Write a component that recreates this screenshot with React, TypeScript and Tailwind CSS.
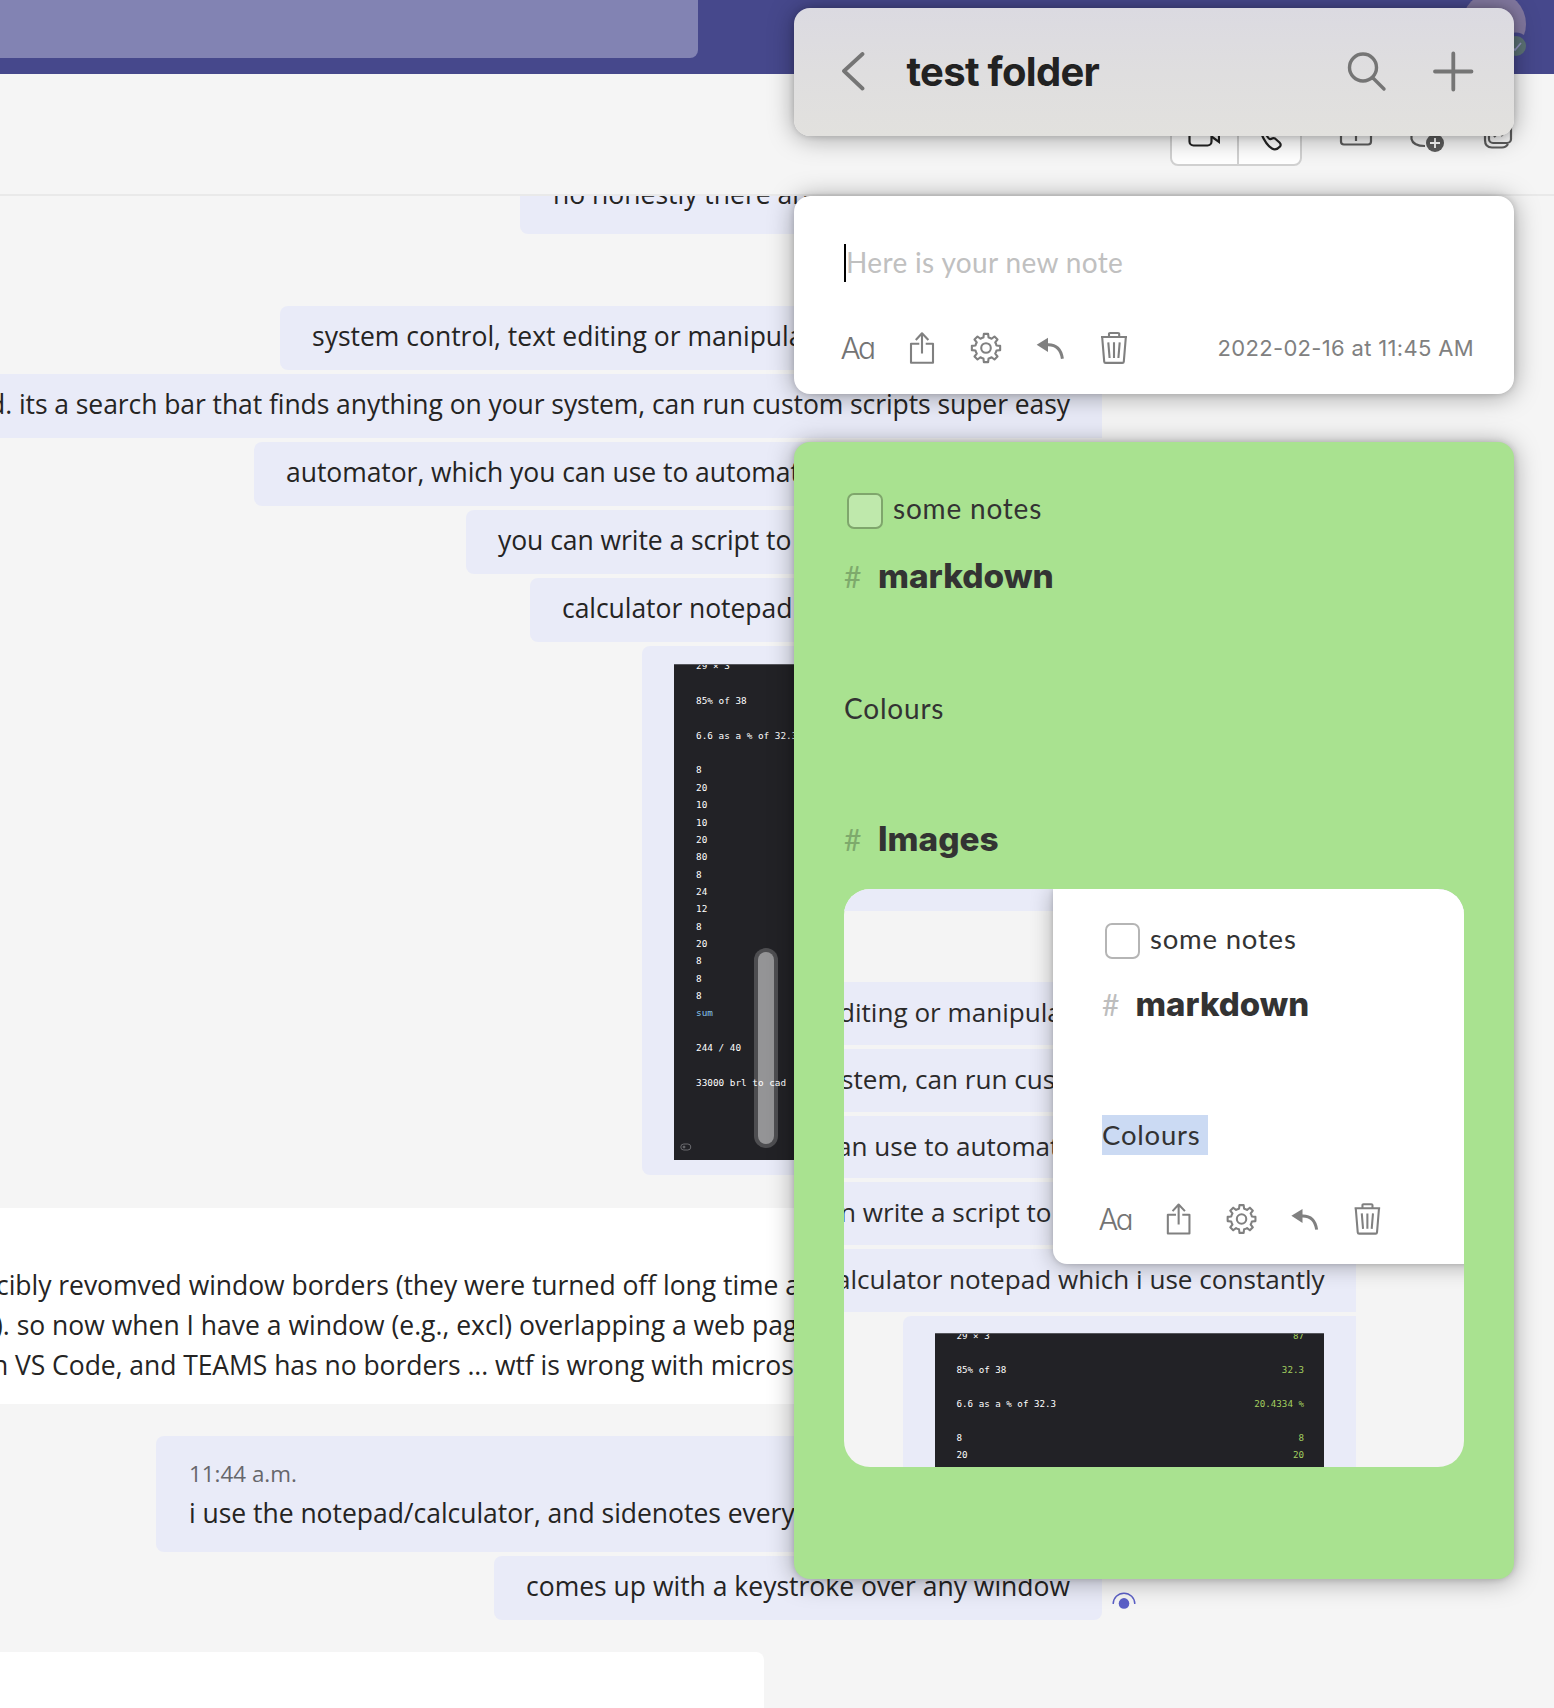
import type { ReactNode } from 'react';

const CALC_ROWS = [
  '29 × 3', '', '85% of 38', '', '6.6 as a % of 32.3', '', '8', '20', '10', '10', '20', '80', '8',
  '24', '12', '8', '20', '8', '8', '8', 'sum', '', '244 / 40', '', '33000 brl to cad',
];

const PREVIEW_ROWS: [string, string][] = [
  ['29 × 3', '87'],
  ['', ''],
  ['85% of 38', '32.3'],
  ['', ''],
  ['6.6 as a % of 32.3', '20.4334 %'],
  ['', ''],
  ['8', '8'],
  ['20', '20'],
];

const GEAR_PATH = (() => {
  const pts: string[] = [];
  for (let k = 0; k < 8; k++) {
    const a = (k * Math.PI) / 4;
    const at = (r: number, t: number) =>
      `${(16 + r * Math.cos(a + t)).toFixed(2)} ${(16 + r * Math.sin(a + t)).toFixed(2)}`;
    pts.push(`${k === 0 ? 'M' : 'A10.6 10.6 0 0 1 '}${at(10.8, -0.24)}`);
    pts.push(`L${at(14.3, -0.15)}`, `L${at(14.3, 0.15)}`, `L${at(10.8, 0.24)}`);
  }
  return `${pts.join('')}A10.6 10.6 0 0 1 ${(16 + 10.8 * Math.cos(-0.24)).toFixed(2)} ${(16 + 10.8 * Math.sin(-0.24)).toFixed(2)}Z`;
})();

function Icon({ children }: { children: ReactNode }) {
  return (
    <svg viewBox="0 0 32 32" className="h-8 w-8 shrink-0 overflow-visible" fill="none" stroke="#808080" strokeWidth="2.1" strokeLinejoin="round">
      {children}
    </svg>
  );
}

function NoteToolbar() {
  return (
    <div className="flex h-8 items-center gap-8">
      <div className="-ml-[1.5px] h-8 w-[33.5px] whitespace-nowrap font-['Inter',sans-serif] text-[30px] leading-[33px] font-light tracking-[-2.5px] text-[#747474] [font-feature-settings:'cv11']">
        Aa
      </div>
      <Icon>
        <path d="M13.3 11.7H5V30.8H27V11.7H19.7M16 1.5V21.5M9.8 8 16 1.3 22.4 8" />
      </Icon>
      <Icon>
        <path d={GEAR_PATH} />
        <circle cx="16" cy="16" r="4.8" />
      </Icon>
      <Icon>
        <path d="M2.7 12.7 14 5.7V20Z" fill="#808080" stroke="none" />
        <path d="M13 12.9C22 12.4 27 17 28.4 26.8" strokeWidth="3" />
      </Icon>
      <Icon>
        <path d="M3 5H29M11 5V1.6Q11 1 12 1H20Q21.2 1 21.2 1.8V5M4.2 5.5 6.2 29.6Q6.3 30.9 7.6 30.9H24.4Q25.7 30.9 25.8 29.6L27.8 5.5M10.3 10.3 11.6 26M16 10.3V26M21.7 10.3 20.4 26" />
      </Icon>
    </div>
  );
}

function Bubble({ className, children }: { className: string; children?: ReactNode }) {
  return (
    <div className={`mt-1 h-16 shrink-0 overflow-hidden rounded-l-lg bg-[#e9ebf8] px-8 leading-[61px] whitespace-nowrap ${className}`}>
      {children}
    </div>
  );
}

function ChatPane() {
  return (
    <div className="flex h-[1512px] flex-col overflow-hidden font-['Open_Sans',sans-serif] text-[26.5px] text-[#252423]">
      <div className="flex w-[1102px] flex-col items-end">
        <div className="h-[38px] w-[582px] overflow-hidden rounded-bl-lg bg-[#e9ebf8] px-8">
          <div className="-mt-8 ml-px leading-[61px] whitespace-nowrap">no honestly there are so many</div>
        </div>
        <Bubble className="mt-[72px] w-[822px]">system control, text editing or manipulation</Bubble>
        <Bubble className="tracking-[-0.07px]">
          d. its a search bar that finds anything on your system, can run custom scripts super easy
        </Bubble>
        <Bubble className="w-[848px] tracking-[-0.05px]">automator, which you can use to automate</Bubble>
        <Bubble className="w-[636px] tracking-[-0.05px]">you can write a script to</Bubble>
        <Bubble className="w-[572px] tracking-[-0.05px]">calculator notepad which i use constantly</Bubble>
        <div className="mt-1 h-[529px] w-[460px] rounded-l-lg bg-[#e9ebf8] px-8 pt-[18px]">
          <div className="relative h-[496px] overflow-hidden border-t border-[#55565c] bg-[#222226] pl-[22px] font-['DejaVu_Sans_Mono',monospace] text-[9.35px] leading-[17.35px] text-white">
            <div className="-mt-[7.6px]">
              {CALC_ROWS.map((row, i) => (
                <div key={i} className={row === 'sum' ? 'h-[17.35px] text-[#86c4ec]' : 'h-[17.35px]'}>{row}</div>
              ))}
            </div>
            <svg className="absolute bottom-[9px] left-[6px] h-2 w-3" viewBox="0 0 12 8" fill="none" stroke="#6b6b6f">
              <rect x="0.8" y="1" width="10" height="6" rx="3" />
              <circle cx="4" cy="4" r="1" fill="#6b6b6f" />
            </svg>
            <div className="absolute top-[283px] left-20 h-[200px] w-6 rounded-full bg-white/20 p-1">
              <div className="h-full rounded-full bg-white/40" />
            </div>
          </div>
        </div>
      </div>

      <div className="mt-[33px] h-[196px] w-[1000px] shrink-0 bg-white pt-[56.5px] leading-10 whitespace-nowrap">
        <div className="-ml-[4px] tracking-[-0.03px]">cibly revomved window borders (they were turned off long time ago</div>
        <div className="-ml-[5px]">). so now when I have a window (e.g., excl) overlapping a web page</div>
        <div className="-ml-[8px] tracking-[-0.05px]">n VS Code, and TEAMS has no borders ... wtf is wrong with microsoft</div>
      </div>

      <div className="flex w-[1102px] flex-col items-end">
        <div className="mt-8 h-[116px] w-[946px] rounded-l-lg bg-[#e9ebf8] px-[33px] pt-[18.5px]">
          <div className="text-[22.4px] leading-[38px] text-[#66666b]">11:44 a.m.</div>
          <div className="leading-10 tracking-[-0.03px] whitespace-nowrap">i use the notepad/calculator, and sidenotes every day</div>
        </div>
        <div className="relative">
          <Bubble className="w-[608px] rounded-r-lg">comes up with a keystroke over any window</Bubble>
          <svg className="absolute bottom-[8px] left-[618px] h-5 w-6" viewBox="0 0 24 20" fill="none">
            <path d="M1.2 12A10.8 10.8 0 0 1 22.8 12" stroke="#5b5fc7" strokeWidth="1.4" />
            <circle cx="12" cy="11.4" r="5.3" fill="#5b5fc7" />
          </svg>
        </div>
      </div>

      <div className="mt-8 h-14 w-[764px] shrink-0 rounded-tr-lg bg-white" />
    </div>
  );
}

function CallBar() {
  return (
    <div className="flex h-[122px] items-start border-b-2 border-[#e9e9e9] pt-[28px] pl-[1170px]">
      <div className="flex h-16 w-[132px] rounded-lg border-2 border-[#d1d1d1] bg-white">
        <div className="flex w-[67px] items-center justify-center border-r-2 border-[#d1d1d1] pr-1">
          <svg viewBox="0 0 34 28" className="h-7 w-[34px]" fill="none" stroke="#242424" strokeWidth="2.2">
            <rect x="3.5" y="3" width="22" height="22.5" rx="4" />
            <path d="M25.5 16.5 33 22V6l-7.5 5.5" />
          </svg>
        </div>
        <div className="flex flex-1 items-center justify-center">
          <svg viewBox="0 0 30 36" className="h-9 w-[30px]" fill="none" stroke="#242424" strokeWidth="2.2" strokeLinejoin="round">
            <path d="M7 3Q2 7 6 17Q11 29 17 32.5Q21 35 25 30.5Q26.500 28.500 24.500 26.500L20 22.500Q18.500 21.500 16 23Q14 23.500 12 20L10.500 17Q10.500 15 13 13L11 5Q9 2 7 3Z" />
          </svg>
        </div>
      </div>
      <svg viewBox="0 0 36 34" className="mt-[12px] ml-9 h-[34px] w-9" fill="none" stroke="#5c5c5c" strokeWidth="2.2">
        <rect x="3" y="3" width="30" height="27.500" rx="3" />
        <path d="M18 27V9" />
      </svg>
      <svg viewBox="0 0 40 40" className="mt-[12px] ml-[34px] h-10 w-10" fill="none" stroke="#5c5c5c" strokeWidth="2.2">
        <path d="M3.500 21V25Q5 32 17 32" />
        <circle cx="27" cy="29" r="9" fill="#5b5b5b" stroke="none" />
        <path d="M22 29H32M27 24V34" stroke="#ffffff" strokeWidth="1.800" />
      </svg>
      <svg viewBox="0 0 32 38" className="mt-[12px] ml-[34px] h-[38px] w-8" fill="none" stroke="#5c5c5c" strokeWidth="2.2">
        <rect x="7" y="5" width="22" height="24" rx="4" />
        <path d="M3 13V26Q3 33.500 10 33.500H20Q24 33.500 26 30M12 23 14.500 20.500M19 22 22.500 18.500" />
      </svg>
    </div>
  );
}

const CARD = 'rounded-2xl shadow-[0_0_6px_rgba(0,0,0,0.16),0_2px_26px_rgba(0,0,0,0.35)]';

function FolderHeader() {
  return (
    <div className={`flex h-32 shrink-0 items-center bg-linear-to-b from-[#dbdae1] via-[#dfdedf] to-[#e2e1de] ${CARD}`}>
      <svg viewBox="0 0 24 40" className="ml-[47px] h-10 w-6" fill="none" stroke="#757575" strokeWidth="3.800" strokeLinecap="round" strokeLinejoin="round">
        <path d="M21.500 2 3 19 21.500 36.500" />
      </svg>
      <div className="ml-[41.5px] font-['Inter',sans-serif] text-[40px] leading-[128px] font-bold tracking-[-0.7px] text-[#222222]">
        test folder
      </div>
      <svg viewBox="0 0 42 42" className="mr-[45px] ml-auto h-[42px] w-[42px]" fill="none" stroke="#757575" strokeWidth="3.400" strokeLinecap="round">
        <circle cx="18" cy="16.500" r="13.500" />
        <path d="M28 27 39 38" />
      </svg>
      <svg viewBox="0 0 42 42" className="mr-[40px] h-[42px] w-[42px]" fill="none" stroke="#757575" strokeWidth="3.800" strokeLinecap="round">
        <path d="M3 20.500H39.500M21.300 2.500V38.500" />
      </svg>
    </div>
  );
}

function NewNote() {
  return (
    <div className={`mt-[60px] h-[198px] shrink-0 bg-white pt-12 ${CARD}`}>
      <div className="ml-[50px] flex h-[38px] border-l-2 border-black font-['Lato',sans-serif] text-[28px] leading-[36px] tracking-[0.35px] text-[#c0c0c0]">
        Here is your new note
      </div>
      <div className="mt-[50px] flex items-center justify-between pr-10 pl-12">
        <NoteToolbar />
        <div className="font-['Inter',sans-serif] text-[22px] leading-8 tracking-[0.33px] text-[#808080]">
          2022-02-16 at 11:45 AM
        </div>
      </div>
    </div>
  );
}

function ImagePreview() {
  return (
    <div className="relative mt-[29px] h-[578px] w-[620px] overflow-hidden rounded-[26px] bg-[#f4f4f4] font-['Open_Sans',sans-serif] text-[26.1px] leading-[60px] whitespace-nowrap text-[#2b2a2a]">
      <div className="h-[22px] bg-[#e9ebf8]" />
      <div className="mt-[71px] flex w-[511.5px] flex-col gap-1">
        <div className="h-[62.8px] overflow-hidden bg-[#e9ebf8]"><div className="-ml-[5px]">diting or manipulation</div></div>
        <div className="h-[62.8px] overflow-hidden bg-[#e9ebf8]"><div className="-ml-[3px]">stem, can run custom</div></div>
        <div className="h-[62.8px] overflow-hidden bg-[#e9ebf8]"><div className="-ml-[7px]">an use to automate</div></div>
        <div className="h-[62.8px] overflow-hidden bg-[#e9ebf8]"><div className="-ml-[4px]">n write a script to</div></div>
        <div className="h-[62.8px] overflow-hidden bg-[#e9ebf8]"><div className="-ml-[8px]">alculator notepad which i use constantly</div></div>
        <div className="ml-[59px] h-[152px] rounded-tl-lg bg-[#e9ebf8] px-8 pt-[17px]">
          <div className="h-[135px] overflow-hidden border-t border-[#55565c] bg-[#222226] pr-[19.5px] pl-[21.500px] font-['DejaVu_Sans_Mono',monospace] text-[9.2px] leading-[17px] text-white">
            <div className="-mt-[7.2px]">
              {PREVIEW_ROWS.map(([left, right], i) => (
                <div key={i} className="flex h-[17px] justify-between">
                  <span>{left}</span>
                  <span className="text-[#a3cf5f]">{right}</span>
                </div>
              ))}
            </div>
          </div>
        </div>
      </div>

      <div className="absolute top-0 left-[208.5px] h-[374.7px] w-[460px] rounded-bl-[14px] bg-white pt-[34px] pl-[49.5px] font-['Lato',sans-serif] text-[27.5px] tracking-[0.8px] text-[#333333] shadow-[0_0_5px_rgba(0,0,0,0.16),0_2px_22px_rgba(0,0,0,0.3)]">
        <div className="flex h-[35.5px]">
          <div className="ml-[2.5px] h-[35.5px] w-[35.5px] rounded-[7px] border-2 border-[#b5b5b5]" />
          <div className="ml-[10px] leading-[31px]">some notes</div>
        </div>
        <div className="mt-[24.5px] flex h-[43px] items-baseline leading-[43px] tracking-normal">
          <span className="w-[33.5px] text-[30px] text-[#bdbdbd]">#</span>
          <span className="font-['Inter',sans-serif] text-[33px] font-extrabold">markdown</span>
        </div>
        <div className="mt-[89px] h-[39.6px] w-[106px] bg-[#cbdaf3] leading-[40px]">Colours</div>
        <div className="mt-[48px] -ml-[2px] origin-left scale-[0.983] tracking-normal">
          <NoteToolbar />
        </div>
      </div>
    </div>
  );
}

function GreenNote() {
  return (
    <div className={`mt-12 h-[1137px] shrink-0 bg-[#a9e290] pt-[51px] pl-[50px] font-['Lato',sans-serif] text-[28px] tracking-[0.8px] text-[#333333] ${CARD}`}>
      <div className="flex h-9">
        <div className="ml-[3px] h-9 w-9 rounded-[7px] border-2 border-[#7fa66c] bg-[#bfe9ac]" />
        <div className="ml-[10px] leading-[31px]">some notes</div>
      </div>
      <div className="mt-[25px] flex h-11 items-baseline leading-[44px] tracking-normal">
        <span className="w-[34px] text-[30px] text-[#7eaa6c]">#</span>
        <span className="font-['Inter',sans-serif] text-[33.4px] font-extrabold">markdown</span>
      </div>
      <div className="mt-[90px] h-10 leading-10">Colours</div>
      <div className="mt-[89px] flex h-11 items-baseline leading-[44px] tracking-normal">
        <span className="w-[34px] text-[30px] text-[#7eaa6c]">#</span>
        <span className="font-['Inter',sans-serif] text-[33.4px] font-extrabold">Images</span>
      </div>
      <div className="-mt-px tracking-normal">
        <ImagePreview />
      </div>
    </div>
  );
}

export default function App() {
  return (
    <div className="relative h-[1708px] w-[1554px] overflow-hidden bg-[#f5f5f5]">
      <div className="flex h-[74px] items-start justify-between bg-[#46488c] pr-7">
        <div className="h-[58px] w-[698px] rounded-br-lg bg-[#8283b3]" />
        <svg viewBox="0 0 64 60" className="h-15 w-16" fill="none">
          <circle cx="32" cy="24" r="32" fill="#82789f" />
          <circle cx="54" cy="46" r="13.500" fill="#46488c" />
          <circle cx="54" cy="46" r="10" fill="#5c7276" />
          <path d="M49.500 46.500 53 50 59 43" stroke="#9496c4" strokeWidth="1.600" />
        </svg>
      </div>
      <CallBar />
      <ChatPane />
      <div className="absolute top-2 left-[794px] flex w-[720px] flex-col">
        <FolderHeader />
        <NewNote />
        <GreenNote />
      </div>
    </div>
  );
}
